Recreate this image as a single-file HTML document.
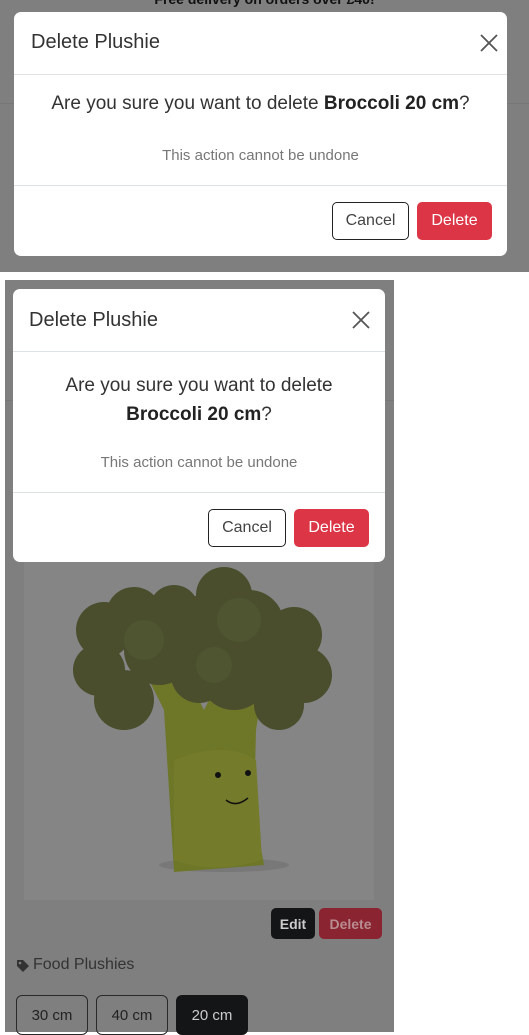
<!DOCTYPE html>
<html><head><meta charset="utf-8"><style>
*{box-sizing:border-box;margin:0;padding:0}
body{width:529px;height:1032px;background:#fff;position:relative;overflow:hidden;font-family:"Liberation Sans",sans-serif;color:#212529}
.abs{position:absolute}
.modal{position:absolute;background:#fff;border-radius:7px}
.title{position:absolute;font-size:20px;font-weight:300;color:#333}
.hr{position:absolute;left:0;right:0;height:1px;background:#dee2e6}
.x{position:absolute;width:18px;height:18px}
.btn{position:absolute;border-radius:5px;font-size:16px;display:flex;align-items:center;justify-content:center;font-weight:300}
.cancel{border:1px solid #222;color:#444;background:#fff}
.del{background:#dc3545;color:#fff}
.sz{position:absolute;top:995px;height:40px;width:72px;border:1px solid #2a2a2a;border-radius:6px;font-size:15px;display:flex;align-items:center;justify-content:center;color:#222}
</style></head><body>
<div class="abs" style="left:0;top:0;width:529px;height:272px;background:#7f7f80"></div>
<div class="abs" style="left:0;top:103px;width:529px;height:1px;background:#777"></div>
<div class="abs" style="left:0;top:-9px;width:529px;text-align:center;font-size:14px;font-weight:bold;color:#111">Free delivery on orders over £40!</div>
<div class="modal" style="left:14px;top:12px;width:493px;height:244px">
  <div class="title" style="left:17px;top:19px">Delete Plushie</div>
  <svg class="x" style="left:466px;top:22px" viewBox="0 0 18 18"><path d="M1 1L17 17M17 1L1 17" stroke="#555" stroke-width="1.8"/></svg>
  <div class="hr" style="top:62px"></div>
  <div class="abs" style="left:0;width:493px;top:81px;text-align:center;font-size:19px;font-weight:300;color:#333">Are you sure you want to delete <b style="font-weight:bold;color:#222">Broccoli 20 cm</b>?</div>
  <div class="abs" style="left:0;width:493px;top:135px;text-align:center;font-size:15px;color:#777">This action cannot be undone</div>
  <div class="hr" style="top:173px"></div>
  <div class="btn cancel" style="left:318px;top:190px;width:77px;height:38px">Cancel</div>
  <div class="btn del" style="left:403px;top:190px;width:75px;height:38px">Delete</div>
</div>
<div class="abs" style="left:5px;top:280px;width:389px;height:752px;background:#7f7f80"></div>
<div class="abs" style="left:5px;top:400px;width:389px;height:1px;background:#777"></div>
<div class="abs" style="left:24px;top:540px;width:350px;height:360px;background:#858585"></div>
<svg class="abs" style="left:24px;top:560px" width="350" height="340" viewBox="0 0 350 340">
  <ellipse cx="200" cy="305" rx="65" ry="7" fill="#787878"/>
  <path d="M140 150 L120 110 L155 100 L180 150 L200 110 L240 120 L232 170 L230 250 L240 305 L150 312 L145 230 Z" fill="#6e7628"/>
  <path d="M150 300 L150 200 Q200 180 232 200 L238 300 Q190 315 150 300Z" fill="#747c2b"/>
  <g fill="#4a4e2d">
    <circle cx="80" cy="70" r="28"/><circle cx="75" cy="110" r="26"/><circle cx="100" cy="140" r="30"/>
    <circle cx="110" cy="55" r="28"/><circle cx="135" cy="90" r="35"/><circle cx="150" cy="50" r="25"/>
    <circle cx="180" cy="75" r="40"/><circle cx="200" cy="35" r="28"/><circle cx="225" cy="65" r="35"/>
    <circle cx="270" cy="75" r="28"/><circle cx="280" cy="115" r="28"/><circle cx="255" cy="145" r="25"/>
    <circle cx="210" cy="115" r="35"/><circle cx="175" cy="115" r="28"/><circle cx="240" cy="105" r="30"/>
  </g>
  <g fill="#4f5431"><circle cx="215" cy="60" r="22"/><circle cx="120" cy="80" r="20"/><circle cx="190" cy="105" r="18"/></g>
  <circle cx="194" cy="215" r="3" fill="#111"/><circle cx="224" cy="213" r="3" fill="#111"/>
  <path d="M202 240 Q212 248 224 238" stroke="#111" stroke-width="1.5" fill="none"/>
</svg>
<div class="modal" style="left:13px;top:289px;width:372px;height:273px">
  <div class="title" style="left:16px;top:20px">Delete Plushie</div>
  <svg class="x" style="left:339px;top:22px" viewBox="0 0 18 18"><path d="M1 1L17 17M17 1L1 17" stroke="#555" stroke-width="1.8"/></svg>
  <div class="hr" style="top:62px"></div>
  <div class="abs" style="left:0;width:372px;top:82px;text-align:center;font-size:19px;font-weight:300;color:#333;line-height:29px">Are you sure you want to delete<br><b style="font-weight:bold;color:#222">Broccoli 20 cm</b>?</div>
  <div class="abs" style="left:0;width:372px;top:165px;text-align:center;font-size:15px;color:#777">This action cannot be undone</div>
  <div class="hr" style="top:203px"></div>
  <div class="btn cancel" style="left:195px;top:220px;width:78px;height:38px">Cancel</div>
  <div class="btn del" style="left:281px;top:220px;width:75px;height:38px">Delete</div>
</div>
<div class="btn" style="left:271px;top:908px;width:44px;height:31px;background:#141517;color:#ccc;font-size:14px;font-weight:bold">Edit</div>
<div class="btn" style="left:319px;top:908px;width:63px;height:31px;background:#8a2430;color:#b88c90;font-size:14px;font-weight:bold">Delete</div>
<svg class="abs" style="left:16px;top:959px" width="14" height="14" viewBox="0 0 14 14"><path d="M1 1H7L13 7L7 13L1 7Z" fill="#333"/><circle cx="4" cy="4" r="1.3" fill="#7f7f80"/></svg>
<div class="abs" style="left:33px;top:956px;font-size:16px;font-weight:300;color:#333">Food Plushies</div>
<div class="sz" style="left:16px">30 cm</div>
<div class="sz" style="left:96px">40 cm</div>
<div class="sz" style="left:176px;background:#141517;color:#ccc;border-color:#141517">20 cm</div>
</body></html>
